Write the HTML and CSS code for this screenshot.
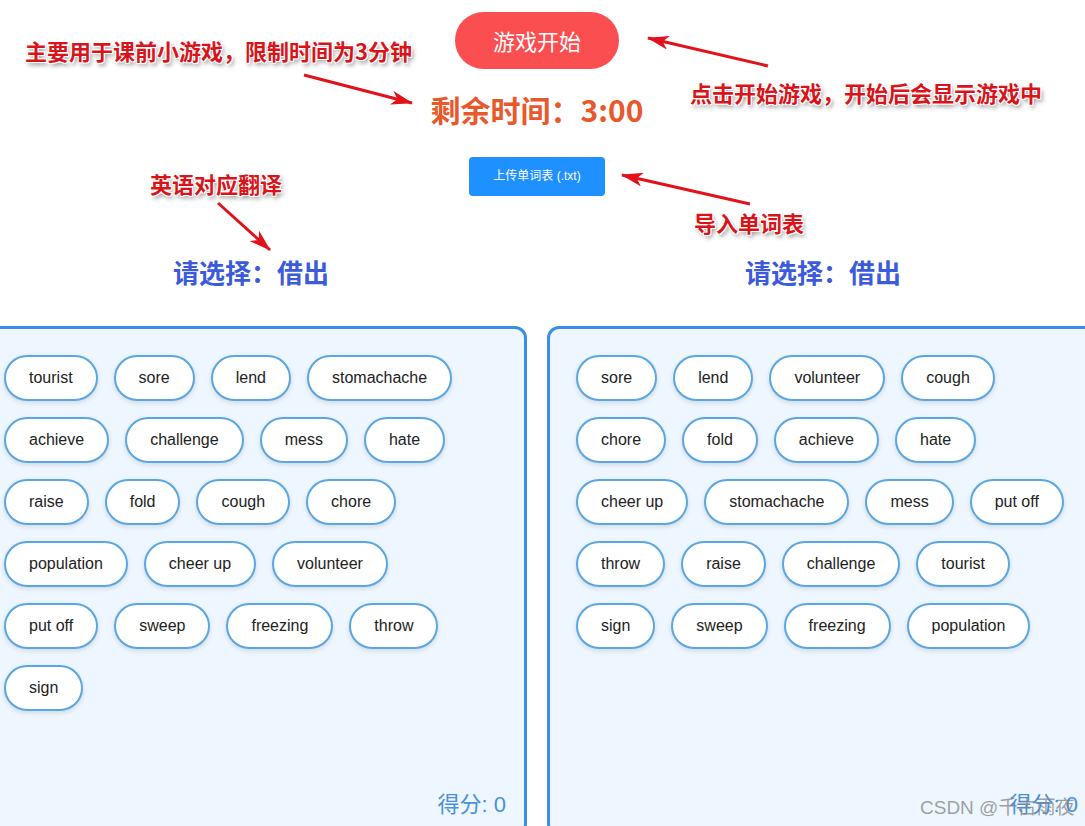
FILE: index.html
```html
<!DOCTYPE html>
<html lang="zh-CN">
<head>
  <meta charset="UTF-8" />
  <title>单词配对小游戏</title>
  <link rel="stylesheet" href="styles.css">
</head>
<body>
  <div class="page">
    <header class="top">
      <button class="start-btn">游戏开始</button>
      <div class="timer">剩余时间：3:00</div>
      <label class="upload-btn">上传单词表 (.txt)<input type="file" accept=".txt"></label>
    </header>

    <main class="board">
      <section class="side">
        <h2 class="prompt">请选择：借出</h2>
        <div class="panel">
          <div class="words">
            <span class="word">tourist</span>
            <span class="word">sore</span>
            <span class="word">lend</span>
            <span class="word">stomachache</span>
            <span class="word">achieve</span>
            <span class="word">challenge</span>
            <span class="word">mess</span>
            <span class="word">hate</span>
            <span class="word">raise</span>
            <span class="word">fold</span>
            <span class="word">cough</span>
            <span class="word">chore</span>
            <span class="word">population</span>
            <span class="word">cheer up</span>
            <span class="word">volunteer</span>
            <span class="word">put off</span>
            <span class="word">sweep</span>
            <span class="word">freezing</span>
            <span class="word">throw</span>
            <span class="word">sign</span>
          </div>
          <div class="score">得分: 0</div>
        </div>
      </section>

      <section class="side">
        <h2 class="prompt">请选择：借出</h2>
        <div class="panel">
          <div class="words">
            <span class="word">sore</span>
            <span class="word">lend</span>
            <span class="word">volunteer</span>
            <span class="word">cough</span>
            <span class="word">chore</span>
            <span class="word">fold</span>
            <span class="word">achieve</span>
            <span class="word">hate</span>
            <span class="word">cheer up</span>
            <span class="word">stomachache</span>
            <span class="word">mess</span>
            <span class="word">put off</span>
            <span class="word">throw</span>
            <span class="word">raise</span>
            <span class="word">challenge</span>
            <span class="word">tourist</span>
            <span class="word">sign</span>
            <span class="word">sweep</span>
            <span class="word">freezing</span>
            <span class="word">population</span>
          </div>
          <div class="score">得分: 0</div>
        </div>
      </section>
    </main>
  </div>

  <!-- annotations drawn over the screenshot -->
  <div class="notes">
    <svg class="arrows" width="1085" height="826" viewBox="0 0 1085 826">
      <defs>
        <marker id="head" markerUnits="userSpaceOnUse" markerWidth="22" markerHeight="14" refX="21" refY="7" orient="auto">
          <path d="M0,0 L22,7 L0,14 L6,7 Z" fill="#e3121a" />
        </marker>
      </defs>
      <line x1="304" y1="75" x2="412" y2="103" marker-end="url(#head)" />
      <line x1="768" y1="66" x2="648" y2="38" marker-end="url(#head)" />
      <line x1="218" y1="203" x2="270" y2="250" marker-end="url(#head)" />
      <line x1="750" y1="204" x2="622" y2="175" marker-end="url(#head)" />
    </svg>
    <span class="note note-time">主要用于课前小游戏，限制时间为3分钟</span>
    <span class="note note-start">点击开始游戏，开始后会显示游戏中</span>
    <span class="note note-word">英语对应翻译</span>
    <span class="note note-upload">导入单词表</span>
  </div>

  <div class="watermark">CSDN @千古雨夜</div>
</body>
</html>
```

FILE: styles.css
```css
html, body {
  overflow: hidden;
}
body {
  margin: 0;
  background: #fff;
  font-family: "Liberation Sans", "Noto Sans CJK SC", sans-serif;
  color: #222;
  height: 826px;
  position: relative;
}
.page {
  width: 1124px;
  margin-left: -25px;
}
.top {
  display: flex;
  flex-direction: column;
  align-items: center;
  padding-top: 12px;
}
.start-btn {
  font-family: "Noto Sans CJK SC", sans-serif;
  font-size: 22px;
  line-height: 25px;
  padding: 16px 38px;
  border: none;
  border-radius: 29px;
  background: #fb4e50;
  color: #fff;
  cursor: pointer;
}
.timer {
  margin-top: 22px;
  font-family: "Noto Sans CJK SC", sans-serif;
  font-size: 30px;
  line-height: 36px;
  font-weight: bold;
  color: #e9582b;
}
.upload-btn {
  margin-top: 30px;
  padding: 12px 24px;
  font-size: 12px;
  line-height: 15px;
  background: #1e90ff;
  color: #fff;
  border-radius: 4px;
  cursor: pointer;
}
.upload-btn input {
  display: none;
}
.board {
  display: grid;
  grid-template-columns: 552px 552px;
  column-gap: 20px;
  margin-top: 60px;
}
.prompt {
  margin: 0;
  text-align: center;
  font-family: "Noto Sans CJK SC", sans-serif;
  font-size: 26px;
  line-height: 32px;
  font-weight: bold;
  color: #3b5bdb;
}
.panel {
  margin-top: 38px;
  height: 510px;
  box-sizing: border-box;
  border: 3px solid #3a8fe2;
  border-radius: 12px;
  background: #eef7ff;
  padding: 26px 28px 15px 26px;
  display: flex;
  flex-direction: column;
}
.words {
  display: flex;
  flex-wrap: wrap;
  gap: 16px;
  align-content: flex-start;
}
.word {
  padding: 12px 23px;
  border: 2px solid #5aa6e2;
  border-radius: 24px;
  background: #fff;
  font-size: 16px;
  line-height: 18px;
  color: #222;
  box-shadow: 0 2px 5px rgba(0, 0, 0, 0.12);
  cursor: pointer;
}
.score {
  margin-top: auto;
  margin-right: -10px;
  align-self: flex-end;
  font-size: 22px;
  line-height: 26px;
  color: #4a90d9;
}

.notes {
  position: absolute;
  left: 0;
  top: 0;
  width: 1085px;
  height: 826px;
  pointer-events: none;
}
.arrows {
  position: absolute;
  left: 0;
  top: 0;
}
.arrows line {
  stroke: #e3121a;
  stroke-width: 3;
}
.note {
  position: absolute;
  font-family: "Noto Sans CJK SC", sans-serif;
  font-size: 22px;
  line-height: 26px;
  font-weight: bold;
  color: #d8141b;
  white-space: nowrap;
  text-shadow: 1px 1px 0 #fff, -1px -1px 0 #fff, 1px -1px 0 #fff, -1px 1px 0 #fff,
    2px 3px 4px rgba(0, 0, 0, 0.45);
}
.note-time { left: 25px; top: 37px; }
.note-start { left: 690px; top: 79px; }
.note-word { left: 150px; top: 170px; }
.note-upload { left: 694px; top: 209px; }

.watermark {
  position: absolute;
  left: 920px;
  top: 796px;
  font-size: 19px;
  line-height: 24px;
  color: rgba(130, 130, 130, 0.75);
  white-space: nowrap;
}
```
